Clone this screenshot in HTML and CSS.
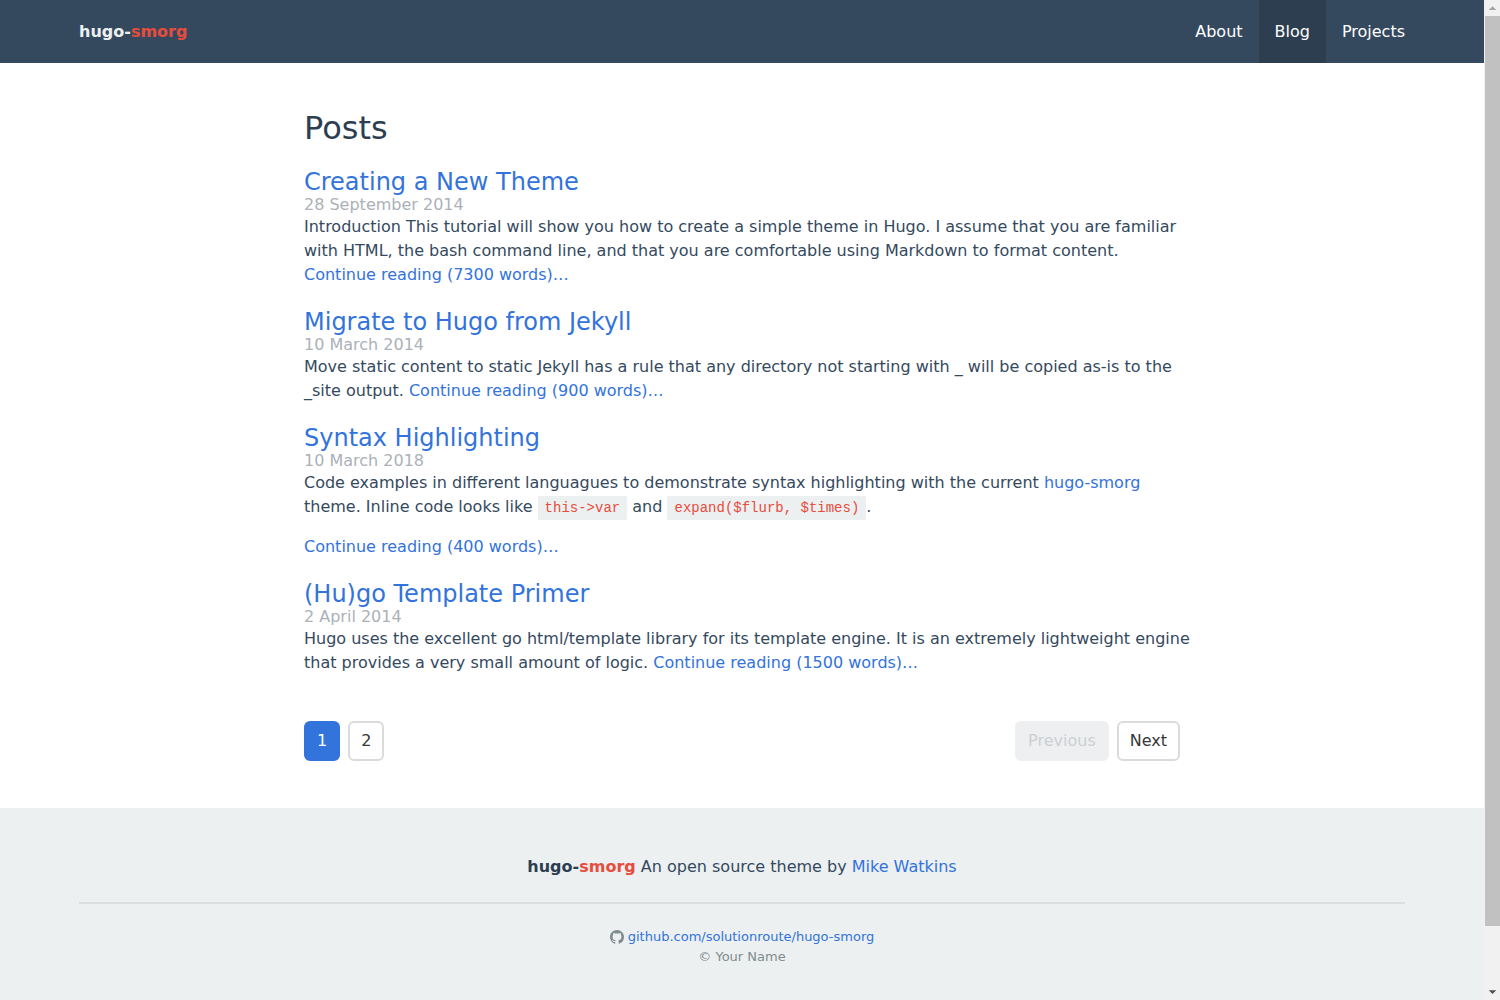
FILE: index.html
```html
<!DOCTYPE html>
<html lang="en">
<head>
<meta charset="utf-8">
<meta name="viewport" content="width=device-width, initial-scale=1">
<title>Posts</title>
<link rel="stylesheet" href="styles.css">
</head>
<body>
<div class="page">
  <header class="navbar">
    <a class="brand" href="#">hugo-<span class="accent">smorg</span></a>
    <nav class="menu">
      <a class="menu-item" href="#">About</a>
      <a class="menu-item is-active" href="#">Blog</a>
      <a class="menu-item" href="#">Projects</a>
    </nav>
  </header>
  <main class="content">
    <h1 class="title">Posts</h1>
    <div class="posts">
      <article class="post">
        <h2 class="post-title"><a href="#">Creating a New Theme</a></h2>
        <time class="post-date">28 September 2014</time>
        <p>Introduction This tutorial will show you how to create a simple theme in Hugo. I assume that you are familiar with HTML, the bash command line, and that you are comfortable using Markdown to format content. <br><a href="#">Continue reading (7300 words)…</a></p>
      </article>
      <article class="post">
        <h2 class="post-title"><a href="#">Migrate to Hugo from Jekyll</a></h2>
        <time class="post-date">10 March 2014</time>
        <p>Move static content to static Jekyll has a rule that any directory not starting with _ will be copied as-is to the _site output. <a href="#">Continue reading (900 words)…</a></p>
      </article>
      <article class="post">
        <h2 class="post-title"><a href="#">Syntax Highlighting</a></h2>
        <time class="post-date">10 March 2018</time>
        <p>Code examples in different languagues to demonstrate syntax highlighting with the current <a href="#">hugo-smorg</a> theme. Inline code looks like <code>this-&gt;var</code> and <code>expand($flurb, $times)</code>.</p>
        <p><a href="#">Continue reading (400 words)…</a></p>
      </article>
      <article class="post">
        <h2 class="post-title"><a href="#">(Hu)go Template Primer</a></h2>
        <time class="post-date">2 April 2014</time>
        <p>Hugo uses the excellent go html/template library for its template engine. It is an extremely lightweight engine that provides a very small amount of logic. <a href="#">Continue reading (1500 words)…</a></p>
      </article>
    </div>
    <nav class="pagination" aria-label="Pagination">
      <div class="page-group">
        <button class="page-button is-current" type="button">1</button>
        <button class="page-button" type="button">2</button>
      </div>
      <div class="page-group">
        <button class="page-button" type="button" disabled>Previous</button>
        <button class="page-button" type="button">Next</button>
      </div>
    </nav>
  </main>
  <footer class="footer">
    <p class="credit"><strong>hugo-<span class="accent">smorg</span></strong> An open source theme by <a href="#">Mike Watkins</a></p>
    <hr>
    <div class="small">
      <p class="repo">
        <svg class="github" viewBox="0 0 16 16" aria-hidden="true"><path fill="currentColor" d="M8 0C3.58 0 0 3.58 0 8c0 3.54 2.29 6.53 5.47 7.59.4.07.55-.17.55-.38 0-.19-.01-.82-.01-1.49-2.01.37-2.53-.49-2.69-.94-.09-.23-.48-.94-.82-1.13-.28-.15-.68-.52-.01-.53.63-.01 1.08.58 1.23.82.72 1.21 1.87.87 2.33.66.07-.52.28-.87.51-1.07-1.78-.2-3.64-.89-3.64-3.95 0-.87.31-1.59.82-2.15-.08-.2-.36-1.02.08-2.12 0 0 .67-.21 2.2.82.64-.18 1.32-.27 2-.27s1.36.09 2 .27c1.53-1.04 2.2-.82 2.2-.82.44 1.1.16 1.92.08 2.12.51.56.82 1.27.82 2.15 0 3.07-1.87 3.75-3.65 3.95.29.25.54.73.54 1.48 0 1.07-.01 1.93-.01 2.2 0 .21.15.46.55.38A8.01 8.01 0 0 0 16 8c0-4.42-3.58-8-8-8z"/></svg>
        <a href="#">github.com/solutionroute/hugo-smorg</a>
      </p>
      <p>© Your Name</p>
    </div>
  </footer>
</div>
<div class="scrollbar" aria-hidden="true">
  <svg class="arrow arrow-up" viewBox="0 0 16 16"><path d="M4 10l4-4 4 4z"/></svg>
  <div class="track"><div class="thumb"></div></div>
  <svg class="arrow" viewBox="0 0 16 16"><path d="M4 6l4 4 4-4z"/></svg>
</div>
</body>
</html>
```
FILE: styles.css
```css
* {
  box-sizing: border-box;
}

body {
  margin: 0;
  display: grid;
  grid-template-columns: 1fr 16px;
  min-height: 100vh;
  background: #fff;
  color: #34495e;
  font: 16px/24px "DejaVu Sans", sans-serif;
}

h1, h2, p {
  margin: 0;
  font-weight: 400;
}

a {
  color: #3273dc;
  text-decoration: none;
}

.accent {
  color: #e74c3c;
}

.page {
  display: flex;
  flex-direction: column;
  min-width: 0;
}

.navbar {
  display: flex;
  justify-content: space-between;
  height: 63px;
  padding: 0 63px;
  background: #34495e;
}

.brand,
.menu-item {
  display: flex;
  align-items: center;
  padding: 0 16px;
  color: #fff;
}

.brand {
  font-weight: 700;
  color: #ecf0f1;
}

.menu {
  display: flex;
}

.menu-item.is-active {
  background: #2c3e50;
}

.content {
  width: 100%;
  max-width: 876px;
  margin: 0 auto;
  padding: 47px 0;
}

.title {
  margin-bottom: 23px;
  color: #2c3e50;
  font-size: 32px;
  line-height: 36px;
}

.posts {
  display: flex;
  flex-direction: column;
  gap: 22px;
  margin-right: -16px;
}

.post-title {
  font-size: 24px;
  line-height: 26px;
}

.post-date {
  display: block;
  color: #abb1b8;
  line-height: 20px;
}

.post p + p {
  margin-top: 16px;
}

code {
  padding: 4px 7px;
  background: #ecf0f1;
  color: #e74c3c;
  font: 14px "Liberation Mono", monospace;
}

.pagination {
  display: flex;
  justify-content: space-between;
  margin-top: 46px;
}

.page-group {
  display: flex;
  gap: 8px;
}

.page-button {
  height: 40px;
  min-width: 36px;
  padding: 0 11px;
  border: 2px solid #dbdbdb;
  border-radius: 6px;
  background: #fff;
  color: #363636;
  font: inherit;
}

.page-button.is-current {
  border-color: #3273dc;
  background: #3273dc;
  color: #fff;
}

.page-button:disabled {
  border-color: #eeeff0;
  background: #eeeff0;
  color: #ccd0d3;
}

.footer {
  flex: 1;
  padding: 47px 79px 31px;
  background: #ecf0f1;
  text-align: center;
}

.footer strong {
  color: #2c3e50;
}

.footer hr {
  height: 2px;
  margin: 23px 0;
  border: 0;
  background: #dbdfe0;
}

.small {
  color: #7f8c8d;
  font-size: 13px;
  line-height: 20px;
}

.repo {
  display: flex;
  justify-content: center;
  align-items: center;
  gap: 4px;
}

.github {
  width: 14px;
  height: 14px;
}

.scrollbar {
  display: flex;
  flex-direction: column;
  padding-left: 1px;
  background: #f1f1f1;
}

.arrow {
  width: 15px;
  height: 16px;
  fill: #505050;
}

.arrow-up {
  fill: #a3a3a3;
}

.track {
  flex: 1;
}

.thumb {
  height: 94%;
  background: #c1c1c1;
}
```
